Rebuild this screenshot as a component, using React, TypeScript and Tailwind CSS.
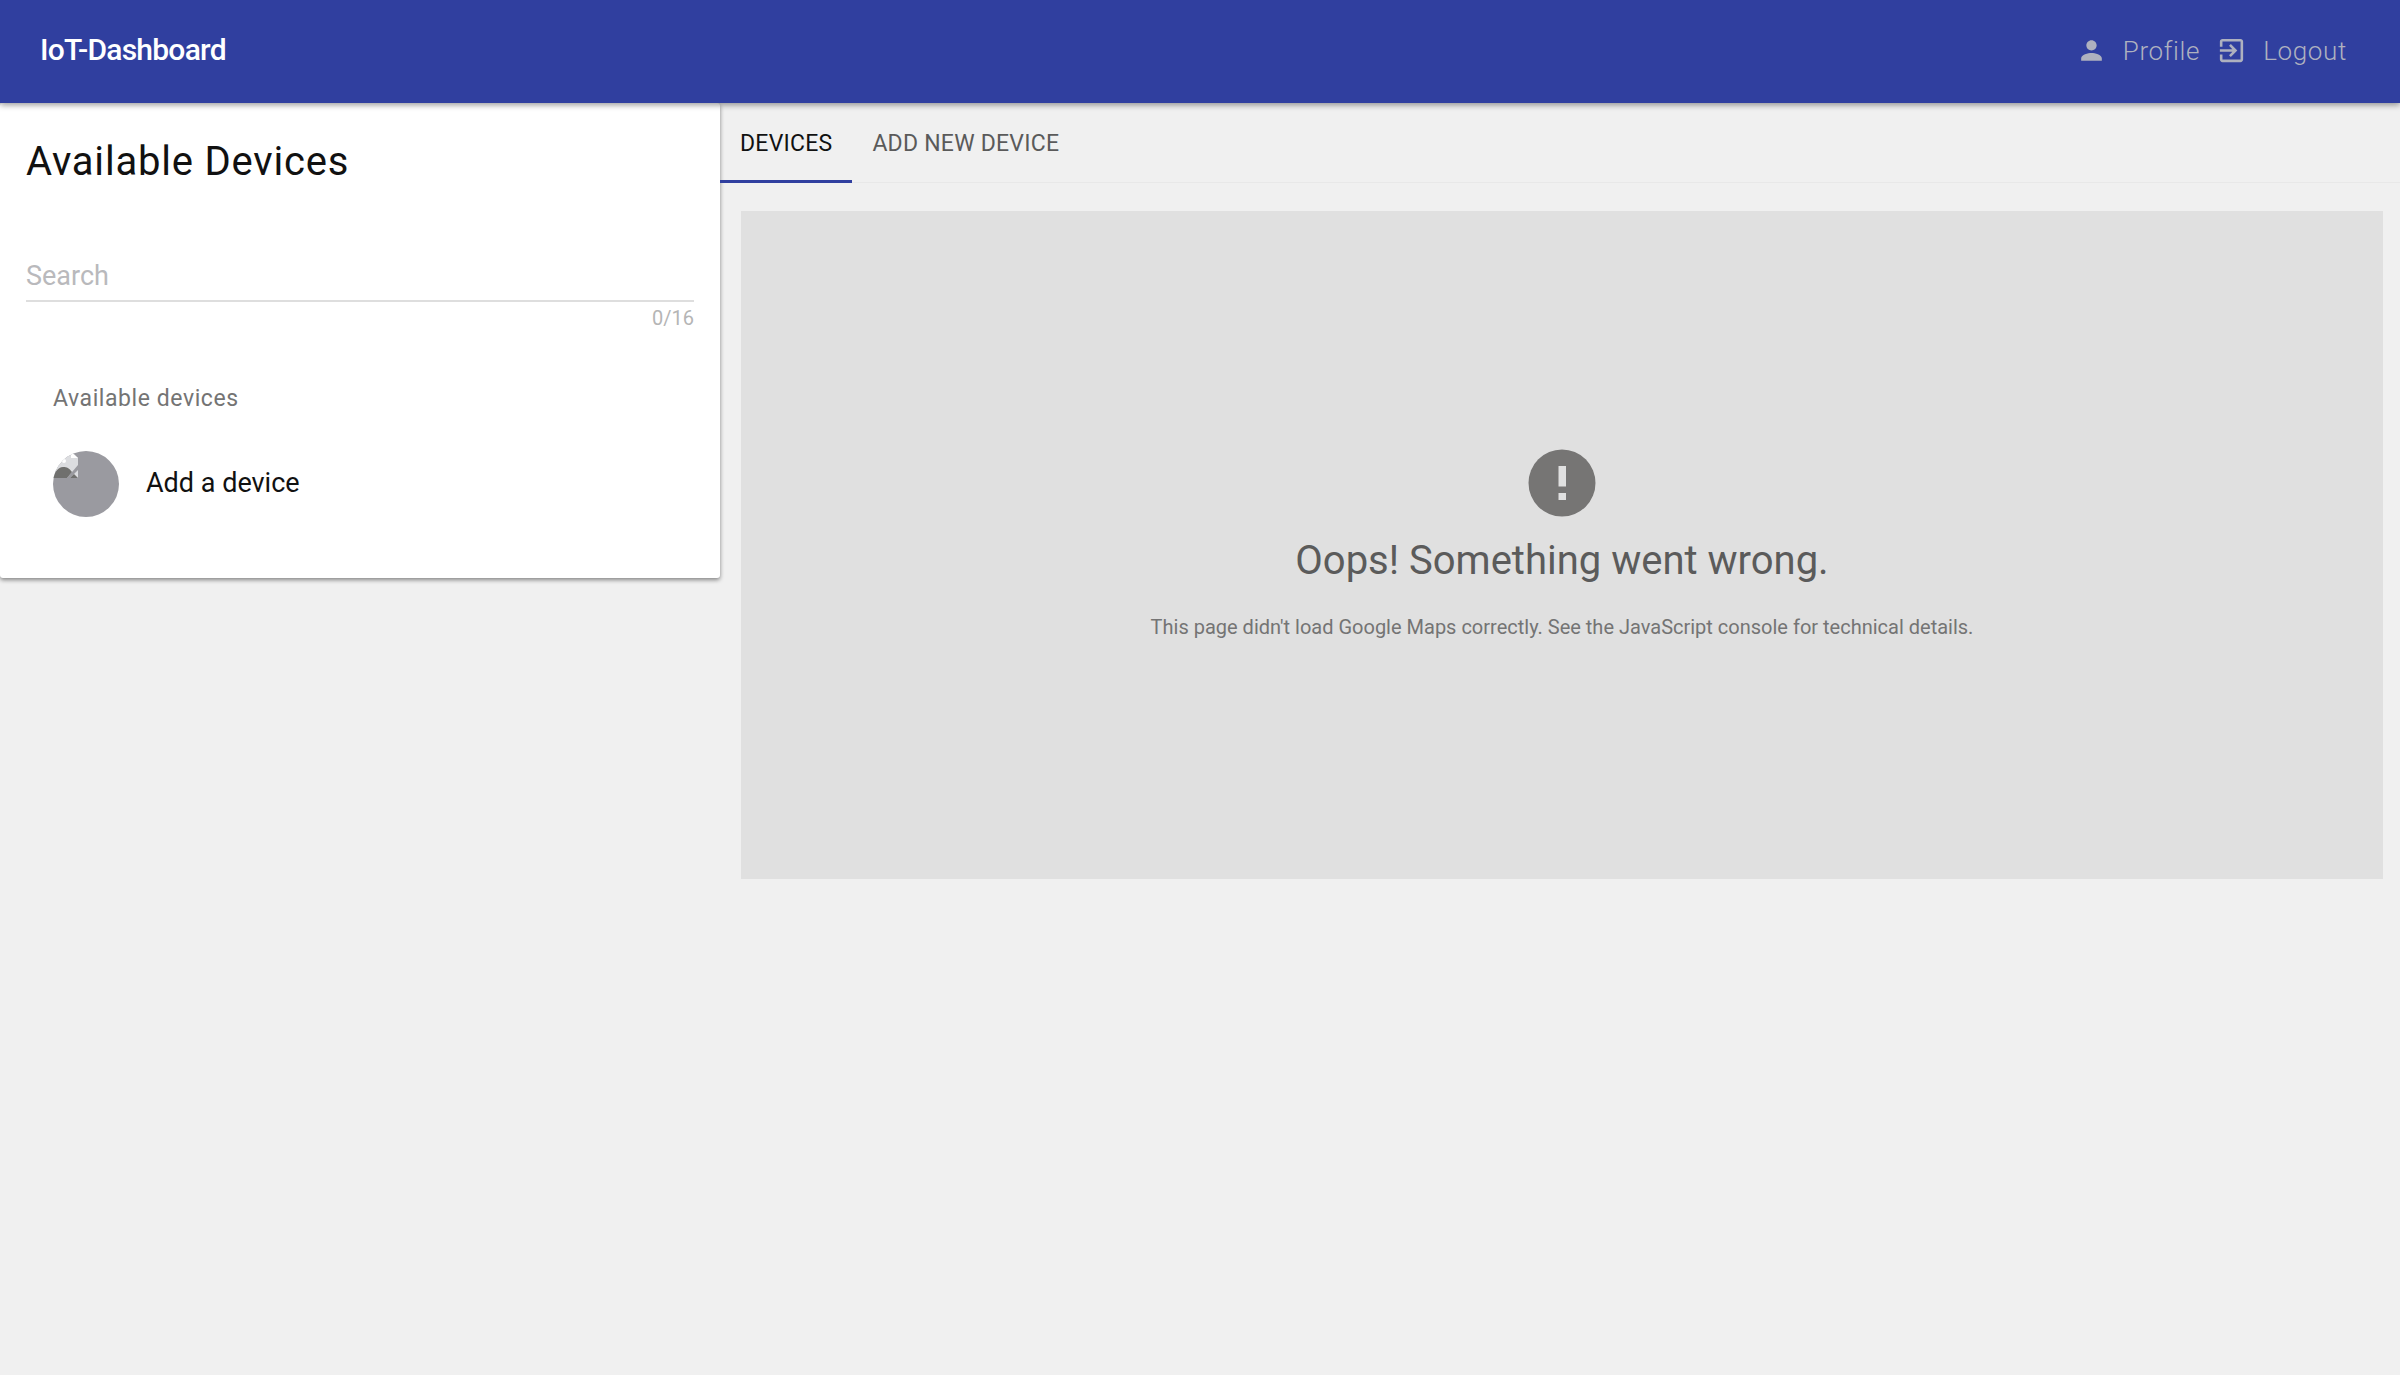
import { useState } from "react";

function PersonIcon() {
  return (
    <svg viewBox="0 0 24 24" className="size-[31px]" fill="currentColor" aria-hidden="true">
      <path d="M12 12c2.21 0 4-1.79 4-4s-1.79-4-4-4-4 1.79-4 4 1.79 4 4 4zm0 2c-2.67 0-8 1.34-8 4v2h16v-2c0-2.66-5.33-4-8-4z" />
    </svg>
  );
}

function ExitIcon() {
  return (
    <svg viewBox="0 0 24 24" className="size-[31px]" fill="currentColor" aria-hidden="true">
      <path d="M10.09 15.59L11.5 17l5-5-5-5-1.41 1.41L12.67 11H3v2h9.67l-2.58 2.59zM19 3H5c-1.11 0-2 .9-2 2v4h2V5h14v14H5v-4H3v4c0 1.1.89 2 2 2h14c1.1 0 2-.9 2-2V5c0-1.1-.9-2-2-2z" />
    </svg>
  );
}

function ErrorIcon() {
  return (
    <svg viewBox="0 0 68 68" className="size-[68px]" aria-hidden="true">
      <circle cx="34" cy="34" r="33.5" fill="#767574" />
      <path d="M30.5 17h7.5v20.5h-7.5zM30.5 44h7.5v7h-7.5z" fill="#e0e0e0" />
    </svg>
  );
}

function MissingAvatar() {
  return (
    <svg viewBox="0 0 66 66" className="size-[66px] shrink-0" role="img" aria-label="Device">
      <defs>
        <clipPath id="avatar">
          <circle cx="33" cy="33" r="33" />
        </clipPath>
      </defs>
      <g clipPath="url(#avatar)">
        <rect width="66" height="66" fill="#9a9aa0" />
        <path d="M0 0h18l7 7v7L14 27H0z" fill="#dcdde0" />
        <circle cx="11" cy="10" r="2" fill="#fff" />
        <path d="M18 1v6h7z" fill="#fff" />
        <path d="M0 27c1-5 5-11 10-11 4 0 6 1 9 5l-5 6z" fill="#70706e" />
        <path d="M25 19v8h-8z" fill="#dcdde0" />
        <path d="M17 27l4-4 4 4z" fill="#70706e" />
      </g>
    </svg>
  );
}

const tabs = ["DEVICES", "ADD NEW DEVICE"];

export default function App() {
  const [query, setQuery] = useState("");
  const [active, setActive] = useState(0);

  return (
    <div className="min-h-screen bg-[#f0f0f0] font-[Roboto,sans-serif] text-[#111]">
      <header className="relative z-10 flex h-[103px] items-center justify-between bg-[#303f9f] pr-[53px] pl-10 shadow-[0_2px_6px_rgba(0,0,0,0.4)]">
        <h1 className="pb-1 text-[30px] leading-10 font-medium tracking-tight text-white">IoT-Dashboard</h1>
        <nav className="flex items-center pb-0.5 text-[26px] leading-8 font-light tracking-wide text-[#aeb1bf]">
          <a href="#profile" className="flex items-center gap-4">
            <PersonIcon />
            Profile
          </a>
          <a href="#logout" className="ml-4 flex items-center gap-4">
            <ExitIcon />
            Logout
          </a>
        </nav>
      </header>

      <div className="flex items-start">
        <aside className="w-[30%] rounded-[3px] bg-white px-[26px] pb-[61px] shadow-[0_2px_4px_rgba(0,0,0,0.45)]">
          <h2 className="pt-[35px] text-[40px] leading-12 tracking-[0.02em]">Available Devices</h2>
          <div className="mt-16">
            <input
              aria-label="Search"
              placeholder="Search"
              maxLength={16}
              value={query}
              onChange={(e) => setQuery(e.target.value)}
              className="block h-[52px] w-full border-b-2 border-[#dedede] pt-0.5 text-[27px] leading-8 outline-none placeholder:text-[#b9b9bc]"
            />
            <p className="mt-0.5 text-right text-[20px] leading-7 text-[#b5b5b5]">{query.length}/16</p>
          </div>
          <section className="px-[27px]">
            <h3 className="mt-[51px] text-[23px] leading-8 tracking-wide text-[#747474]">Available devices</h3>
            <button type="button" className="mt-9 flex w-full items-center gap-[27px] text-left text-[27px] leading-8">
              <MissingAvatar />
              <span className="pb-0.5">Add a device</span>
            </button>
          </section>
        </aside>

        <main className="min-w-0 flex-1">
          <div role="tablist" className="flex h-20 border-b border-[#e8e8e8]">
            {tabs.map((tab, i) => (
              <button
                key={tab}
                type="button"
                role="tab"
                aria-selected={i === active}
                onClick={() => setActive(i)}
                className={
                  i === active
                    ? "h-20 border-b-3 border-[#303f9f] px-5 pt-1 text-[23px] leading-8 tracking-[0.01em] text-[#111]"
                    : "h-20 border-b-3 border-transparent px-5 pt-1 text-[23px] leading-8 tracking-[0.01em] text-[#5a5a5a]"
                }
              >
                {tab}
              </button>
            ))}
          </div>
          <div className="mt-7 mr-[17px] mb-5 ml-[21px] flex h-[668px] flex-col items-center bg-[#e0e0e0] pt-[238px]">
            <ErrorIcon />
            <p className="mt-5 text-[40px] leading-12 text-[#5b5b5b]">Oops! Something went wrong.</p>
            <p className="mt-7 text-[20px] leading-7 text-[#747474]">
              This page didn't load Google Maps correctly. See the JavaScript console for technical details.
            </p>
          </div>
        </main>
      </div>
    </div>
  );
}
